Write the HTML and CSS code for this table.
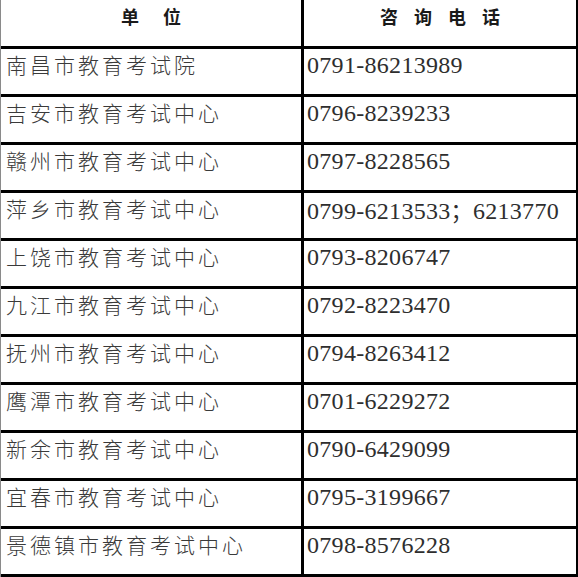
FILE: index.html
```html
<!DOCTYPE html>
<html lang="zh-CN">
<head>
<meta charset="utf-8">
<link rel="stylesheet" href="styles.css">
</head>
<body>
<div class="sheet">
  <div class="cell head left"><span class="h-unit">单位</span></div>
  <div class="cell head right"><span class="h-tel">咨询电话</span></div>

  <div class="cell left name">南昌市教育考试院</div>
  <div class="cell right tel">0791-86213989</div>

  <div class="cell left name">吉安市教育考试中心</div>
  <div class="cell right tel">0796-8239233</div>

  <div class="cell left name">赣州市教育考试中心</div>
  <div class="cell right tel">0797-8228565</div>

  <div class="cell left name">萍乡市教育考试中心</div>
  <div class="cell right tel">0799-6213533<span class="semi">；</span>6213770</div>

  <div class="cell left name">上饶市教育考试中心</div>
  <div class="cell right tel">0793-8206747</div>

  <div class="cell left name">九江市教育考试中心</div>
  <div class="cell right tel">0792-8223470</div>

  <div class="cell left name">抚州市教育考试中心</div>
  <div class="cell right tel">0794-8263412</div>

  <div class="cell left name">鹰潭市教育考试中心</div>
  <div class="cell right tel">0701-6229272</div>

  <div class="cell left name">新余市教育考试中心</div>
  <div class="cell right tel">0790-6429099</div>

  <div class="cell left name">宜春市教育考试中心</div>
  <div class="cell right tel">0795-3199667</div>

  <div class="cell left name">景德镇市教育考试中心</div>
  <div class="cell right tel">0798-8576228</div>
</div>
</body>
</html>
```

FILE: styles.css
```css
html, body {
  margin: 0;
  padding: 0;
  background: #ffffff;
}

.sheet {
  width: 578px;
  display: grid;
  grid-template-columns: 303px 275px;
  grid-template-rows: 49px repeat(11, 48px);
  border-left: 1px solid #8a8a8a;
  box-sizing: border-box;
}

.cell {
  border-bottom: 3px solid #000;
  box-sizing: border-box;
  overflow: hidden;
  white-space: nowrap;
}

.left {
  border-right: 3px solid #000;
}

.right {
  border-right: 3px solid #000;
}

.head {
  display: flex;
  justify-content: center;
  font-family: "Noto Sans CJK SC", "Noto Sans", sans-serif;
  font-weight: 700;
  font-size: 18px;
  line-height: 24px;
  color: #1a1a1a;
  padding-top: 4px;
}

.h-unit {
  letter-spacing: 24px;
  padding-left: 24px;
}

.h-tel {
  letter-spacing: 16px;
  padding-left: 16px;
}

.name {
  font-family: "Noto Sans CJK SC", "Noto Sans", sans-serif;
  font-weight: 300;
  font-size: 21px;
  letter-spacing: 3px;
  line-height: 24px;
  color: #3a3a3a;
  padding: 3px 0 0 5px;
}

.tel {
  font-family: "Liberation Serif", "Noto Sans CJK SC", serif;
  font-size: 24px;
  letter-spacing: 0.3px;
  line-height: 24px;
  color: #2e2e2e;
  padding: 4px 0 0 3px;
}

.semi {
  font-family: "Noto Sans CJK SC", sans-serif;
  font-size: 22px;
}
```
